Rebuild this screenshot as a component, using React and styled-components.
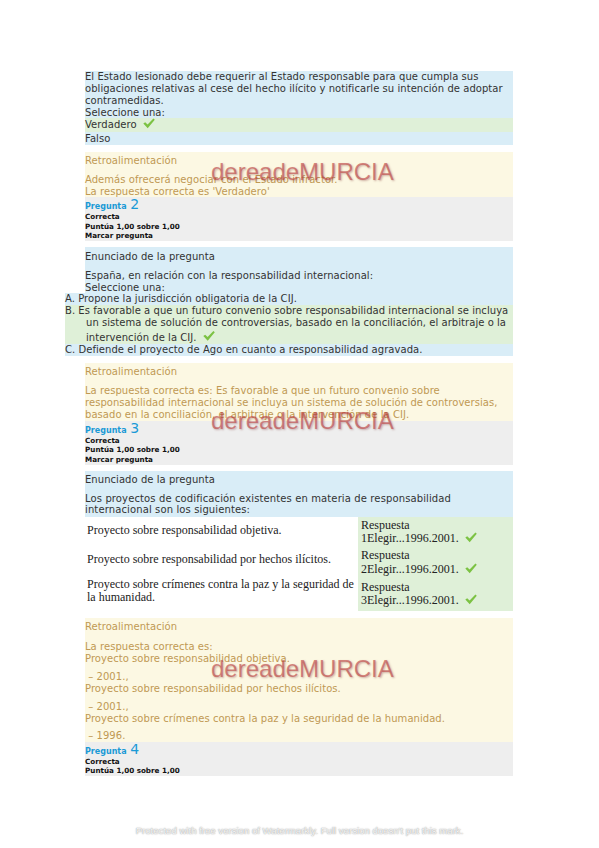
import React from "react";
import styled, { createGlobalStyle } from "styled-components";

const GlobalStyle = createGlobalStyle`
  html, body { margin: 0; padding: 0; background: #fff; }
  body { font-family: "DejaVu Sans", "Noto Sans", sans-serif; font-size: 10px; color: #333; letter-spacing: 0.05px; }
`;

const Page = styled.div`
  position: relative;
  width: 599px;
  height: 848px;
  box-sizing: border-box;
  padding: 71px 0 0 85px;
  overflow: hidden;
`;

const Column = styled.div`
  width: 428px;
  display: flex;
  flex-direction: column;
`;

const Formulation = styled.div`
  background: #d9edf7;
  margin-top: ${(p) => p.$mt || 0}px;
  padding-top: ${(p) => p.$pt || 0}px;
  padding-bottom: ${(p) => p.$pb || 0}px;
`;

const Heading = styled.div`
  line-height: 12px;
`;

const QText = styled.div`
  line-height: ${(p) => p.$lh || 12}px;
  margin-top: ${(p) => p.$mt || 0}px;
  letter-spacing: ${(p) => p.$ls || 0.05}px;
`;

const Prompt = styled.div`
  line-height: 11px;
`;

const Option = styled.div`
  background: ${(p) => (p.$correct ? "#dff0d8" : "#d9edf7")};
  line-height: ${(p) => p.$lh || 12}px;
  padding-top: ${(p) => p.$pt || 0}px;
  padding-bottom: ${(p) => p.$pb || 0}px;
  ${(p) =>
    p.$outdent
      ? `margin-left: -20px; padding-left: 21px; text-indent: -21px;`
      : ""}
`;

const Feedback = styled.div`
  background: #fcf8e3;
  color: #c09853;
  margin-top: 7px;
  padding-top: ${(p) => p.$pt || 3}px;
  padding-bottom: ${(p) => p.$pb || 0}px;
`;

const FbTitle = styled.div`
  line-height: 12px;
  margin-bottom: ${(p) => p.$mb || 7}px;
`;

const FbText = styled.div`
  line-height: ${(p) => p.$lh || 12}px;
`;

const FbPara = styled.div`
  line-height: 12px;
  margin-top: ${(p) => p.$mt || 0}px;
`;

const Info = styled.div`
  background: #eeeeee;
  color: #111;
  padding-bottom: ${(p) => p.$pb || 0}px;
`;

const QNo = styled.div`
  color: #1a9ad6;
  font-weight: bold;
  font-size: 8px;
  line-height: 14px;
  height: 15px;
  letter-spacing: 0;
  span {
    font-weight: normal;
    font-size: 14px;
    margin-left: 1px;
  }
`;

const State = styled.div`
  font-weight: bold;
  font-size: 7.2px;
  line-height: 9.7px;
  letter-spacing: 0;
`;

const MatchTable = styled.div`
  display: grid;
  grid-template-columns: 273px 155px;
  grid-template-rows: 31px 30px 33px;
  font-family: "Liberation Serif", "DejaVu Serif", serif;
  font-size: 12px;
  color: #222;
  letter-spacing: 0;
`;

const StemCell = styled.div`
  background: #fff;
  display: flex;
  align-items: center;
  padding-left: 2px;
  padding-bottom: ${(p) => p.$pb || 3}px;
  line-height: 13.5px;
  box-sizing: border-box;
`;

const ControlCell = styled.div`
  background: #dff0d8;
  display: flex;
  flex-direction: column;
  justify-content: center;
  padding-left: 3px;
  line-height: 13.5px;
`;

const Watermark = styled.div`
  position: absolute;
  left: 211px;
  top: ${(p) => p.$top}px;
  font-family: "Liberation Sans", Arial, sans-serif;
  font-size: 24px;
  line-height: 24px;
  letter-spacing: 0;
  color: rgba(188, 62, 62, 0.6);
  text-shadow: 1px 1px 2px rgba(120, 40, 40, 0.35);
  pointer-events: none;
  white-space: nowrap;
`;

const FooterMark = styled.div`
  position: absolute;
  left: 0;
  right: 0;
  top: 825px;
  text-align: center;
  font-family: "Liberation Sans", Arial, sans-serif;
  font-size: 9.6px;
  letter-spacing: 0;
  color: #f6f6f6;
  text-shadow: 0 0 1px #999, 0 0 2px #bbb;
`;

const CheckSvg = styled.svg`
  display: inline-block;
  vertical-align: -1px;
  margin-left: 3px;
  text-indent: 0;
`;

const Check = ({ tall }) => (
  <CheckSvg
    width="12"
    height={tall ? 12.5 : 11}
    viewBox={tall ? "0 -1.5 12 12.5" : "0 0 12 11"}
  >
    <path d="M0.3 5.6 L2.2 4.2 L4.6 6.6 L10.4 0.4 L11.8 1.8 L4.7 10.2 Z" fill="#7cc243" />
  </CheckSvg>
);

export default function App() {
  return (
    <>
      <GlobalStyle />
      <Page>
        <Column>
          <Formulation>
            <QText>
              El Estado lesionado debe requerir al Estado responsable para que cumpla sus
              obligaciones relativas al cese del hecho ilícito y notificarle su intención de adoptar
              contramedidas.
            </QText>
            <Prompt>Seleccione una:</Prompt>
            <Option $correct $lh={14}>
              Verdadero <Check />
            </Option>
            <Option $lh={13}>Falso</Option>
          </Formulation>

          <Feedback $pt={3}>
            <FbTitle $mb={7}>Retroalimentación</FbTitle>
            <FbText $lh={11.5}>
              Además ofrecerá negociar con el Estado infractor.
              <br />
              La respuesta correcta es 'Verdadero'
            </FbText>
          </Feedback>

          <Info>
            <QNo>
              Pregunta <span>2</span>
            </QNo>
            <State>Correcta</State>
            <State>Puntúa 1,00 sobre 1,00</State>
            <State>Marcar pregunta</State>
          </Info>

          <Formulation $mt={6} $pt={4}>
            <Heading>Enunciado de la pregunta</Heading>
            <QText $mt={7}>España, en relación con la responsabilidad internacional:</QText>
            <Prompt>Seleccione una:</Prompt>
            <Option $outdent>A. Propone la jurisdicción obligatoria de la CIJ.</Option>
            <Option $outdent $correct>
              B. Es favorable a que un futuro convenio sobre responsabilidad internacional se incluya
              un sistema de solución de controversias, basado en la conciliación, el arbitraje o la
              intervención de la CIJ. <Check tall />
            </Option>
            <Option $outdent>C. Defiende el proyecto de Ago en cuanto a responsabilidad agravada.</Option>
          </Formulation>

          <Feedback $pt={3}>
            <FbTitle $mb={7}>Retroalimentación</FbTitle>
            <FbText>
              La respuesta correcta es: Es favorable a que un futuro convenio sobre
              responsabilidad internacional se incluya un sistema de solución de controversias,
              basado en la conciliación, el arbitraje o la intervención de la CIJ.
            </FbText>
          </Feedback>

          <Info>
            <QNo>
              Pregunta <span>3</span>
            </QNo>
            <State>Correcta</State>
            <State>Puntúa 1,00 sobre 1,00</State>
            <State>Marcar pregunta</State>
          </Info>

          <Formulation $mt={6} $pt={3} $pb={1}>
            <Heading>Enunciado de la pregunta</Heading>
            <QText $mt={7} $lh={11.5} $ls={0.12}>
              Los proyectos de codificación existentes en materia de responsabilidad
              internacional son los siguientes:
            </QText>
          </Formulation>
          <MatchTable>
            <StemCell>Proyecto sobre responsabilidad objetiva.</StemCell>
            <ControlCell>
              <div>Respuesta</div>
              <div>
                1Elegir...1996.2001. <Check />
              </div>
            </ControlCell>
            <StemCell $pb={5}>Proyecto sobre responsabilidad por hechos ilícitos.</StemCell>
            <ControlCell>
              <div>Respuesta</div>
              <div>
                2Elegir...1996.2001. <Check />
              </div>
            </ControlCell>
            <StemCell $pb={6}>
              Proyecto sobre crímenes contra la paz y la seguridad de la humanidad.
            </StemCell>
            <ControlCell>
              <div>Respuesta</div>
              <div>
                3Elegir...1996.2001. <Check />
              </div>
            </ControlCell>
          </MatchTable>

          <Feedback $pt={3}>
            <FbTitle $mb={8}>Retroalimentación</FbTitle>
            <FbPara>
              La respuesta correcta es:
              <br />
              Proyecto sobre responsabilidad objetiva.
            </FbPara>
            <FbPara $mt={6}>
              &nbsp;– 2001.,
              <br />
              Proyecto sobre responsabilidad por hechos ilícitos.
            </FbPara>
            <FbPara $mt={6}>
              &nbsp;– 2001.,
              <br />
              Proyecto sobre crímenes contra la paz y la seguridad de la humanidad.
            </FbPara>
            <FbPara $mt={5}>&nbsp;– 1996.</FbPara>
          </Feedback>

          <Info>
            <QNo>
              Pregunta <span>4</span>
            </QNo>
            <State>Correcta</State>
            <State>Puntúa 1,00 sobre 1,00</State>
          </Info>
        </Column>

        <Watermark $top={160}>dereadeMURCIA</Watermark>
        <Watermark $top={409}>dereadeMURCIA</Watermark>
        <Watermark $top={657}>dereadeMURCIA</Watermark>
        <FooterMark>
          Protected with free version of Watermarkly. Full version doesn't put this mark.
        </FooterMark>
      </Page>
    </>
  );
}
